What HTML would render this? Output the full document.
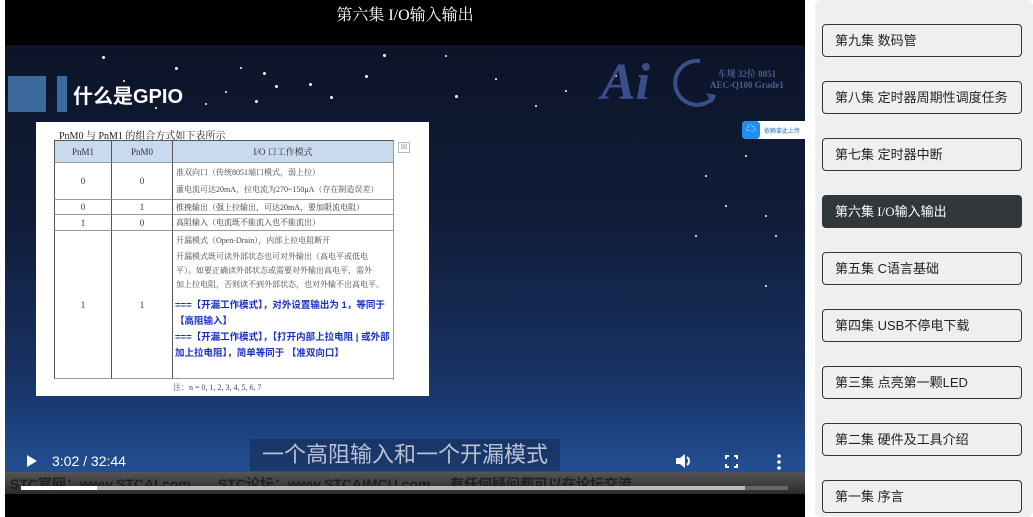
<!DOCTYPE html>
<html><head><meta charset="utf-8"><style>
*{margin:0;padding:0;box-sizing:border-box}
body{width:1033px;height:517px;background:#fff;position:relative;overflow:hidden;font-family:"Liberation Sans","Noto Sans CJK SC",sans-serif}
.a{position:absolute}
#vid{left:5px;top:0;width:800px;height:517px;background:#000}
#scene{left:0;top:45px;width:800px;height:449px;background:linear-gradient(180deg,#0c1428 0%,#111d3a 40%,#183466 75%,#234f92 95%)}
.st{position:absolute;background:#fff;border-radius:50%}
#slide{left:31px;top:77px;width:393px;height:274px;background:#fff}
.tb{font-family:"Liberation Serif","Noto Serif CJK SC",serif;color:#333}
.c{position:absolute;border-left:1px solid #555;border-bottom:1px solid #999;font-size:9px;display:flex;align-items:center;justify-content:center}
.l{position:absolute;font-size:8px;color:#444;white-space:nowrap;font-family:"Liberation Serif","Noto Serif CJK SC",serif}
.bl{position:absolute;font-size:9.5px;color:#1a2fc8;font-weight:bold;line-height:16px;font-family:"Liberation Sans","Noto Sans CJK SC",sans-serif}
#panel{left:815px;top:0;width:218px;height:517px;background:#efefef;border-radius:6px}
.btn{position:absolute;left:822px;width:200px;height:33px;border:1px solid #333;border-radius:4px;font-size:13px;color:#222;padding-left:12px;line-height:31px}
.sel{background:#33363b;color:#fff;border-color:#33363b}
</style></head><body>
<div id="vid" class="a">
 <div class="a" style="left:0;top:0;width:800px;height:45px;background:#000;color:#fff;font-size:16px;text-align:center;line-height:32px;font-family:'Liberation Serif','Noto Serif CJK SC',serif">第六集 I/O输入输出</div>
 <div id="scene" class="a">
  <div class="st" style="left:97px;top:11px;width:3px;height:3px"></div>
  <div class="st" style="left:170px;top:22px;width:3px;height:3px"></div>
  <div class="st" style="left:258px;top:27px;width:3px;height:3px"></div>
  <div class="st" style="left:270px;top:40px;width:3px;height:3px"></div>
  <div class="st" style="left:304px;top:38px;width:3px;height:3px"></div>
  <div class="st" style="left:325px;top:51px;width:3px;height:3px"></div>
  <div class="st" style="left:360px;top:30px;width:3px;height:3px"></div>
  <div class="st" style="left:378px;top:9px;width:3px;height:3px"></div>
  <div class="st" style="left:220px;top:46px;width:2px;height:2px"></div>
  <div class="st" style="left:250px;top:55px;width:3px;height:3px"></div>
  <div class="st" style="left:450px;top:50px;width:3px;height:3px"></div>
  <div class="st" style="left:490px;top:33px;width:2px;height:2px"></div>
  <div class="st" style="left:560px;top:45px;width:2px;height:2px"></div>
  <div class="st" style="left:150px;top:62px;width:2px;height:2px"></div>
  <div class="st" style="left:118px;top:35px;width:2px;height:2px"></div>
  <div class="st" style="left:700px;top:130px;width:2px;height:2px"></div>
  <div class="st" style="left:720px;top:160px;width:2px;height:2px"></div>
  <div class="st" style="left:760px;top:240px;width:2px;height:2px"></div>
  <div class="st" style="left:690px;top:190px;width:2px;height:2px"></div>
  <div class="st" style="left:530px;top:60px;width:2px;height:2px"></div>
  <div class="st" style="left:200px;top:58px;width:2px;height:2px"></div>
  <div class="st" style="left:235px;top:22px;width:2px;height:2px"></div>
  <div class="st" style="left:440px;top:10px;width:2px;height:2px"></div>
  <div class="st" style="left:610px;top:30px;width:2px;height:2px"></div>
  <div class="st" style="left:740px;top:110px;width:2px;height:2px"></div>
  <div class="st" style="left:770px;top:190px;width:2px;height:2px"></div>
  <div class="st" style="left:760px;top:170px;width:2px;height:2px"></div>
  <div class="a" style="left:3px;top:31px;width:38px;height:36px;background:#3c6a9c"></div>
  <div class="a" style="left:52px;top:31px;width:10px;height:36px;background:#3c6a9c"></div>
  <div class="a" style="left:68px;top:35px;color:#fff;font-size:20px;font-weight:bold">什么是GPIO</div>
  <div class="a" style="left:596px;top:10px;color:#3a4f8a;font-size:52px;font-style:italic;font-weight:bold;font-family:'Liberation Serif',serif;line-height:56px">Ai</div>
  <svg class="a" style="left:665px;top:12px" width="50" height="52"><path d="M30 4A22 22 0 1 0 44 40" stroke="#3a4f8a" stroke-width="4" fill="none"/><path d="M36 36l10 2-4 8z" fill="#3a4f8a"/></svg>
  <div class="a" style="left:705px;top:24px;color:#4a5f90;font-size:9px;font-weight:bold;font-family:'Liberation Serif','Noto Serif CJK SC',serif;line-height:11px;text-align:center">车规 32位 8051<br>AEC-Q100 Grade1</div>
  <div class="a" style="left:737px;top:76px;width:63px;height:18px;background:#fff;border-radius:4px 0 0 4px"><div style="width:18px;height:18px;background:#1e8ef0;border-radius:4px;color:#fff;font-size:10px;text-align:center;line-height:18px">☁</div><span class="a" style="left:22px;top:5px;font-size:6px;color:#1e6ad0;white-space:nowrap">依赖拿此上传</span></div>
  <div id="slide" class="a tb">
   <div class="l" style="left:23px;top:5px;font-size:10px;color:#222">PnM0 与 PnM1 的组合方式如下表所示</div>
   <div class="a" style="left:18px;top:18px;width:340px;height:240px;border-top:1px solid #555;border-right:1px solid #999">
    <div class="c" style="left:0;top:0;width:57px;height:22px;background:#c9d9ee">PnM1</div>
    <div class="c" style="left:57px;top:0;width:61px;height:22px;background:#c9d9ee">PnM0</div>
    <div class="c" style="left:118px;top:0;width:221px;height:22px;background:#c9d9ee">I/O 口工作模式</div>
    <div class="c" style="left:0;top:22px;width:57px;height:37px">0</div>
    <div class="c" style="left:57px;top:22px;width:61px;height:37px">0</div>
    <div class="c" style="left:118px;top:22px;width:221px;height:37px"></div>
    <div class="l" style="left:122px;top:26px">准双向口（传统8051端口模式，弱上拉）</div>
    <div class="l" style="left:122px;top:43px">灌电流可达20mA，拉电流为270~150μA（存在制造误差）</div>
    <div class="c" style="left:0;top:59px;width:57px;height:15px">0</div>
    <div class="c" style="left:57px;top:59px;width:61px;height:15px">1</div>
    <div class="c" style="left:118px;top:59px;width:221px;height:15px;justify-content:flex-start;padding-left:3px;font-size:8px">推挽输出（强上拉输出，可达20mA，要加限流电阻）</div>
    <div class="c" style="left:0;top:74px;width:57px;height:16px">1</div>
    <div class="c" style="left:57px;top:74px;width:61px;height:16px">0</div>
    <div class="c" style="left:118px;top:74px;width:221px;height:16px;justify-content:flex-start;padding-left:3px;font-size:8px">高阻输入（电流既不能流入也不能流出）</div>
    <div class="c" style="left:0;top:90px;width:57px;height:148px">1</div>
    <div class="c" style="left:57px;top:90px;width:61px;height:148px">1</div>
    <div class="c" style="left:118px;top:90px;width:221px;height:148px"></div>
    <div class="l" style="left:122px;top:94px">开漏模式（Open-Drain），内部上拉电阻断开</div>
    <div class="l" style="left:122px;top:110px">开漏模式既可读外部状态也可对外输出（高电平或低电</div>
    <div class="l" style="left:122px;top:124px">平）。如要正确读外部状态或需要对外输出高电平，需外</div>
    <div class="l" style="left:122px;top:138px">加上拉电阻，否则读不到外部状态，也对外输不出高电平。</div>
    <div class="bl" style="left:121px;top:157px;width:218px">===【开漏工作模式】，对外设置输出为 1，等同于 【高阻输入】<br>===【开漏工作模式】，【打开内部上拉电阻 | 或外部加上拉电阻】，简单等同于 【准双向口】</div>
   </div>
   <div class="l" style="left:137px;top:260px;font-size:8px">注：n = 0, 1, 2, 3, 4, 5, 6, 7</div>
   <div class="a" style="left:362px;top:20px;width:12px;height:11px;border:1px solid #bbb;font-size:7px;color:#777;text-align:center">☒</div>
  </div>
  <div class="a" style="left:245px;top:394px;width:310px;height:32px;background:rgba(20,40,80,.55);color:#b9c2d2;font-size:22px;text-align:center;line-height:32px">一个高阻输入和一个开漏模式</div>
 </div>
 <div class="a" style="left:0;top:472px;width:800px;height:22px;background:linear-gradient(180deg,#555 0,#2b2b2b 100%)"></div>
 <div class="a" style="left:5px;top:474px;color:#111;font-size:14px;font-weight:bold;white-space:nowrap;opacity:.7">STC官网：www.STCAI.com &nbsp;&nbsp;&nbsp;&nbsp;&nbsp; STC论坛：www.STCAIMCU.com &nbsp;&nbsp;&nbsp; 有任何疑问都可以在论坛交流</div>
 <div class="a" style="left:16px;top:486px;width:724px;height:4px;background:#bbb"></div>
 <div class="a" style="left:740px;top:486px;width:43px;height:4px;background:#666"></div>
 <div class="a" style="left:16px;top:486px;width:76px;height:4px;background:#fff"></div>
 <svg class="a" style="left:20px;top:454px" width="14" height="14"><path d="M2 1L12 7L2 13Z" fill="#fff"/></svg>
 <div class="a" style="left:47px;top:453px;color:#fff;font-size:14px">3:02 / 32:44</div>
 <svg class="a" style="left:670px;top:453px" width="18" height="16"><path d="M1 5h4l5-4v14l-5-4H1z" fill="#fff"/><path d="M12 4a5 5 0 0 1 0 8" stroke="#fff" stroke-width="2" fill="none"/></svg>
 <svg class="a" style="left:720px;top:455px" width="13" height="13" fill="none" stroke="#fff" stroke-width="2"><path d="M1 4V1h3M9 1h3v3M12 9v3H9M4 12H1V9"/></svg>
 <svg class="a" style="left:771px;top:454px" width="6" height="16" fill="#fff"><circle cx="3" cy="2" r="1.8"/><circle cx="3" cy="8" r="1.8"/><circle cx="3" cy="14" r="1.8"/></svg>
</div>
<div id="panel" class="a"></div>
<div class="btn" style="top:24px">第九集 数码管</div>
<div class="btn" style="top:81px">第八集 定时器周期性调度任务</div>
<div class="btn" style="top:138px">第七集 定时器中断</div>
<div class="btn sel" style="top:195px;font-family:'Liberation Serif','Noto Sans CJK SC',serif">第六集 I/O输入输出</div>
<div class="btn" style="top:252px">第五集 C语言基础</div>
<div class="btn" style="top:309px">第四集 USB不停电下载</div>
<div class="btn" style="top:366px">第三集 点亮第一颗LED</div>
<div class="btn" style="top:423px">第二集 硬件及工具介绍</div>
<div class="btn" style="top:480px">第一集 序言</div>
</body></html>
